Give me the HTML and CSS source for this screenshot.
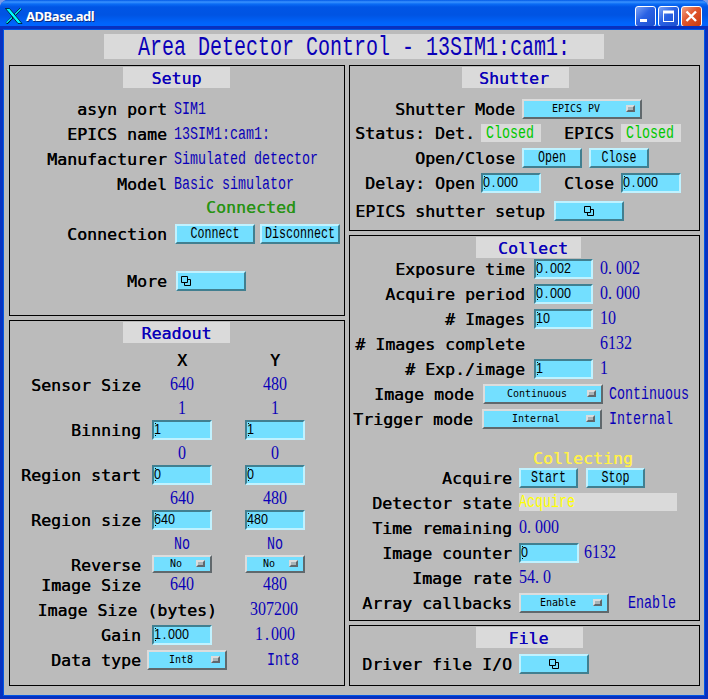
FILE: index.html
```html
<!DOCTYPE html>
<html lang="en">
<head>
<meta charset="utf-8">
<title>ADBase.adl</title>
<link rel="stylesheet" href="styles.css">
</head>
<body>
<svg class="defs" width="0" height="0">
  <symbol id="related" viewBox="0 0 10 10"><path d="M3.5 3.5H9.5V9.5H3.5Z" fill="none" stroke="#000"/><path d="M0.5 0.5H6.5V6.5H0.5Z" fill="#73dfff" stroke="#000"/></symbol>
</svg>
<div class="window">
  <header class="titlebar">
    <svg class="xicon" width="18" height="16" viewBox="0 0 18 16"><path d="M16 .5L1.5 15.5" stroke="#000" stroke-width="2.4"/><path d="M16 .5L10 6.5M7 9.5L1.5 15" stroke="#0ff" stroke-width="1.2"/><path d="M.5 .5H4.5L17 15.5H13Z" fill="#0ff" stroke="#000" stroke-width=".7"/></svg>
    <h1>ADBase.adl</h1>
    <button class="wb"><svg width="21" height="21"><rect x="5" y="13" width="7" height="3" fill="#fff"/></svg></button>
    <button class="wb"><svg width="21" height="21"><path d="M5 6.5H16M5.5 5V16M15.5 5V16M5 15.5H16" stroke="#fff" fill="none"/><path d="M5 6H16" stroke="#fff" stroke-width="3"/></svg></button>
    <button class="wb close"><svg width="21" height="21"><path d="M5.5 5.5L15 15M15 5.5L5.5 15" stroke="#fff" stroke-width="2.4"/></svg></button>
  </header>
  <main>
    <h2 class="banner"><span>Area Detector Control - 13SIM1:cam1:</span></h2>
    <div class="columns">
      <div class="column">
        <section class="panel setup">
          <h3>Setup</h3>
          <div class="row"><label>asyn port</label><span class="val">SIM1</span></div>
          <div class="row"><label>EPICS name</label><span class="val">13SIM1:cam1:</span></div>
          <div class="row"><label>Manufacturer</label><span class="val">Simulated detector</span></div>
          <div class="row"><label>Model</label><span class="val">Basic simulator</span></div>
          <div class="row connected">Connected</div>
          <div class="row"><label>Connection</label><button class="btn w80"><span>Connect</span></button><button class="btn w80"><span>Disconnect</span></button></div>
          <div class="row"><label>More</label><button class="btn w70 more"><svg width="10" height="10"><use href="#related"/></svg></button></div>
        </section>
        <section class="panel readout">
          <h3>Readout</h3>
          <div class="row"><label></label><b class="cell">X</b><b class="cell">Y</b></div>
          <div class="row"><label>Sensor Size</label><span class="cell val num">640</span><span class="cell val num">480</span></div>
          <div class="row"><label></label><span class="cell val num">1</span><span class="cell val num">1</span></div>
          <div class="row"><label>Binning</label><div class="input cell"><span>1</span></div><div class="input cell"><span>1</span></div></div>
          <div class="row"><label></label><span class="cell val num">0</span><span class="cell val num">0</span></div>
          <div class="row"><label>Region start</label><div class="input cell"><span>0</span></div><div class="input cell"><span>0</span></div></div>
          <div class="row"><label></label><span class="cell val num">640</span><span class="cell val num">480</span></div>
          <div class="row"><label>Region size</label><div class="input cell"><span>640</span></div><div class="input cell"><span>480</span></div></div>
          <div class="row"><label></label><span class="cell val">No</span><span class="cell val">No</span></div>
          <div class="row"><label>Reverse</label><div class="menu cell short"><span>No</span><i></i></div><div class="menu cell short"><span>No</span><i></i></div></div>
          <div class="row"><label>Image Size</label><span class="cell val num">640</span><span class="cell val num">480</span></div>
          <div class="row bytes"><label>Image Size (bytes)</label><span class="cell val num">307200</span></div>
          <div class="row"><label>Gain</label><div class="input cell"><span>1<em>.</em>000</span></div><span class="cell val num">1<em>.</em>000</span></div>
          <div class="row datatype"><label>Data type</label><div class="menu w80"><span>Int8</span><i></i></div><span class="val">Int8</span></div>
        </section>
      </div>
      <div class="column">
        <section class="panel shutter">
          <h3>Shutter</h3>
          <div class="row wide"><label>Shutter Mode</label><div class="menu w120"><span>EPICS PV</span><i></i></div></div>
          <div class="row pair status"><label>Status: Det.</label><div class="chip"><span class="val">Closed</span></div><label>EPICS</label><div class="chip"><span class="val">Closed</span></div></div>
          <div class="row wide"><label>Open/Close</label><button class="btn w60"><span>Open</span></button><button class="btn w60"><span>Close</span></button></div>
          <div class="row pair"><label>Delay: Open</label><div class="input w60"><span>0<em>.</em>000</span></div><label>Close</label><div class="input w60"><span>0<em>.</em>000</span></div></div>
          <div class="row link"><label>EPICS shutter setup</label><button class="btn w70"><svg width="10" height="10"><use href="#related"/></svg></button></div>
        </section>
        <section class="panel collect">
          <h3>Collect</h3>
          <div class="row"><label>Exposure time</label><div class="input"><span>0<em>.</em>002</span></div><span class="val num">0<em>.</em>002</span></div>
          <div class="row"><label>Acquire period</label><div class="input"><span>0<em>.</em>000</span></div><span class="val num">0<em>.</em>000</span></div>
          <div class="row"><label># Images</label><div class="input"><span>10</span></div><span class="val num">10</span></div>
          <div class="row"><label># Images complete</label><div class="blank"></div><span class="val num">6132</span></div>
          <div class="row"><label># Exp./image</label><div class="input"><span>1</span></div><span class="val num">1</span></div>
          <div class="row mode"><label>Image mode</label><div class="menu w120"><span>Continuous</span><i></i></div><span class="val">Continuous</span></div>
          <div class="row mode trigger"><label>Trigger mode</label><div class="menu w120"><span>Internal</span><i></i></div><span class="val">Internal</span></div>
          <div class="row collecting">Collecting</div>
          <div class="row state"><label>Acquire</label><button class="btn"><span>Start</span></button><button class="btn"><span>Stop</span></button></div>
          <div class="row state"><label>Detector state</label><div class="chip acquire"><span class="val">Acquire</span></div></div>
          <div class="row state"><label>Time remaining</label><span class="val num">0<em>.</em>000</span></div>
          <div class="row state counter"><label>Image counter</label><div class="input w60"><span>0</span></div><span class="val num">6132</span></div>
          <div class="row state"><label>Image rate</label><span class="val num">54<em>.</em>0</span></div>
          <div class="row state callbacks"><label>Array callbacks</label><div class="menu w90"><span>Enable</span><i></i></div><span class="val">Enable</span></div>
        </section>
        <section class="panel file">
          <h3>File</h3>
          <div class="row state"><label>Driver file I/O</label><button class="btn w70"><svg width="10" height="10"><use href="#related"/></svg></button></div>
        </section>
      </div>
    </div>
  </main>
</div>
</body>
</html>
```
FILE: styles.css
```css
* { box-sizing: border-box; }
body { margin: 0; width: 708px; height: 699px; overflow: hidden; background: #7b9be8; }
h1, h2, h3 { margin: 0; font-weight: normal; }
button { padding: 0; margin: 0; }
.defs { display: block; height: 0; }
.window {
  width: 708px; height: 699px; display: flex; flex-direction: column;
  border-radius: 8px 8px 0 0; overflow: hidden;
  font: 16.6px/22px "DejaVu Sans Mono", monospace; color: #000;
  background: #0046e0;
}

/* Title bar */
.titlebar {
  height: 30px; flex: none; display: flex; align-items: center;
  padding: 2px 6px 0 5px;
  background: linear-gradient(#0058e6 0, #3a93ff 2px, #0a6cf5 4px, #0055e5 7px, #0054e3 15px, #0064fb 23px, #0066ff 27px, #0046c8 30px);
}
.xicon { margin-right: 3px; }
.titlebar h1 { flex: 1; font: bold 13px/20px "Noto Sans", sans-serif; letter-spacing: -.45px; color: #fff; text-shadow: 1px 1px 0 #0a2a80; }
.wb {
  width: 21px; height: 21px; margin-left: 2px; border: 1px solid #fff; border-radius: 3px;
  background: linear-gradient(135deg, #7ba2f5, #2a62e4 45%, #1c50d0); overflow: hidden; display: block;
}
.wb svg { display: block; margin: -1px; }
.wb.close { background: linear-gradient(135deg, #f0a084, #e0552c 45%, #c93a10); }

/* Client area */
main { flex: 1; margin: 0 4px 4px; padding: 4px 4px 0 5px; background: #bbb; box-shadow: 0 0 0 1px #0055e5, 0 0 0 4px #0831c0; }
.banner { width: 500px; height: 25px; margin: 0 0 6px 95px; background: #dadada; color: #0a00b8; text-align: center; }
.banner span { display: inline-block; font: 20px/27px "Liberation Mono", monospace; transform: scaleY(1.42); white-space: pre; }
.columns { display: grid; grid-template-columns: 336px 351px; gap: 4px; }
.column { display: flex; flex-direction: column; gap: 4px; }
.panel { border: 1px solid #000; padding-top: 1px; display: grid; align-content: start; align-items: start; }
.panel h3 { width: 107px; height: 21px; font-size: 16.6px; line-height: 23px; text-align: center; background: #dadada; color: #0a00b8; text-shadow: .3px 0 #0a00b8; }

.setup { height: 251px; grid-template-rows: 32px 25px 25px 25px 23px 27px 47px 20px; }
.readout { height: 366px; grid-template-rows: 28px 25px 24px 21px 24px 21px 24px 21px 24px 21px 20px 25px 25px 25px 20px; }
.shutter { height: 166px; grid-template-rows: 32px 24px 25px 25px 28px 20px; }
.collect { height: 386px; grid-template-rows: 22px 25px 25px 25px 25px 25px 25px 39px 20px 25px 25px 25px 25px 25px 20px; }
.file { height: 61px; grid-template-rows: 27px 20px; }
.setup h3, .readout h3 { margin-left: 113px; }
.shutter h3 { margin-left: 112px; padding-right: 3px; }
.collect h3 { width: 105px; margin-left: 126px; padding-left: 9px; }
.file h3 { margin-left: 126px; padding-right: 2px; }

.row { display: flex; height: 20px; white-space: nowrap; }
.row label, .row b { display: block; flex: none; text-align: right; text-shadow: .3px 0 #000; font-weight: normal; }
.row b.cell { text-align: center; text-shadow: .6px 0 #000; }
.row > .btn, .row > .menu, .row > .input, .row > .chip, .row > .cell, .row > .blank { flex: none; }

/* Readings: narrow, tall type */
.val { display: block; height: 20px; font: 13.33px/20px "Liberation Mono", monospace; color: #0a00b8; transform: scaleY(1.42); transform-origin: 50% 9px; }
.val.num { font: 16px/18px "Liberation Serif", serif; transform: scaleY(1.22); }
em { display: inline-block; width: 8px; font-style: normal; }

/* Widgets */
.btn, .input, .menu { height: 20px; border: 2px solid; background: #73dfff; color: #000; font: 11.67px/16px "Liberation Mono", monospace; }
.btn { width: 59px; border-color: #c0f2ff #417f90 #417f90 #c0f2ff; display: flex; align-items: center; justify-content: center; }
.btn span { display: block; transform: scaleY(1.38); }
.btn svg { display: block; }
.input {
  width: 59px; border-color: #417f90 #c0f2ff #c0f2ff #417f90; font: 12.6px/15px "Liberation Sans", sans-serif; text-align: left;
  background: linear-gradient(#000, #000) 1px 1px / 1px 1px no-repeat, linear-gradient(#000, #000) 1px 13px / 1px 1px no-repeat, #73dfff;
}
.input span { display: inline-block; transform: scaleY(1.15); transform-origin: 50% 7px; }
.input em { width: 7px; text-align: center; }
.menu { border-color: #dcdcdc #60686c #60686c #dcdcdc; display: flex; align-items: center; padding-right: 5px; font: 10px/14px "DejaVu Sans Mono", monospace; }
.menu span { flex: 1; text-align: center; padding-left: 2px; }
.menu i { width: 9px; height: 7px; margin-bottom: 2px; border: 2px solid; border-color: #dcdcdc #60686c #60686c #dcdcdc; background: #a8b4b8; }
.menu.short { height: 18px; }
.chip { width: 60px; height: 18px; background: #dadada; }
.w60 { width: 60px; } .w70 { width: 70px; } .w80 { width: 80px; } .w90 { width: 90px; } .w120 { width: 120px; }

/* Setup */
.setup label { width: 157px; }
.setup .val { margin-left: 7px; }
.setup .btn { margin-left: 8px; }
.setup .btn + .btn { margin-left: 5px; }
.setup .more { margin-left: 9px; justify-content: flex-start; padding-left: 3px; }
.connected { padding-left: 196px; color: #289315; text-shadow: .3px 0 #289315; }

/* Readout */
.readout label { width: 131px; }
.readout .cell { width: 60px; margin-left: 11px; text-align: center; }
.readout .cell + .cell { margin-left: 33px; }
.readout .input.cell { text-align: left; }
.bytes label { width: 207px; letter-spacing: -.02px; }
.readout .bytes .cell { margin-left: 27px; }
.datatype .menu { margin-left: 6px; }
.datatype .val { margin-left: 40px; }

/* Shutter */
.wide label { width: 165px; }
.wide .menu, .wide .btn { margin-left: 7px; }
.pair label { width: 125px; margin-right: 6px; }
.pair label ~ label { width: 73px; margin-right: 7px; }
.status .chip { margin-top: 1px; }
.chip .val { color: #00c800; padding-left: 5px; line-height: 18px; transform-origin: 50% 8px; }
.link label { width: 195px; margin-right: 9px; }

/* Collect */
.collect label { width: 175px; }
.collect .input, .blank { margin-left: 9px; width: 59px; }
.collect .val { margin-left: 7px; }
.mode label { width: 124px; }
.mode .menu { margin-left: 9px; }
.mode .val { margin-left: 6px; }
.trigger label { width: 123px; }
.trigger .val { margin-left: 7px; }
.collecting { padding-left: 183px; color: #fff04a; text-shadow: .3px 0 #fff04a; }
.row.state label { width: 162px; margin-right: 7px; }
.state .btn + .btn { margin-left: 8px; }
.row.state .input { width: 60px; margin-left: 0; }
.row.state .val { margin-left: 0; }
.row.counter .val { margin-left: 5px; }
.row.callbacks .val { margin-left: 19px; }
.acquire { width: 158px; }
.acquire .val { color: #ff0; padding-left: 0; }
```
